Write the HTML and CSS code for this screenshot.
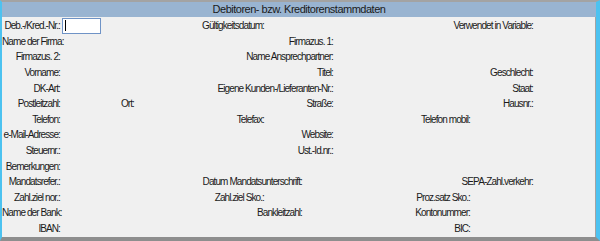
FILE: index.html
```html
<!DOCTYPE html>
<html lang="de">
<head>
    <meta charset="UTF-8">
    <meta name="viewport" content="width=device-width, initial-scale=1.0">
    <title>Debitoren- bzw. Kreditorenstammdaten</title>
    <link rel="stylesheet" href="styles.css">
</head>
<body>
    <div class="window">
        <div class="title-bar">Debitoren- bzw. Kreditorenstammdaten</div>
        <div class="panel">
            <div class="row first">
                <label class="c1">Deb.-/Kred.-Nr.:</label>
                <div class="field c2"><span class="caret"></span></div>
                <label class="c3">Gültigkeitsdatum:</label>
                <label class="c6-7">Verwendet in Variable:</label>
            </div>
            <div class="row">
                <label class="c1">Name der Firma:</label>
                <label class="c4-5">Firmazus. 1:</label>
            </div>
            <div class="row">
                <label class="c1">Firmazus. 2:</label>
                <label class="c3-5">Name Ansprechpartner:</label>
            </div>
            <div class="row">
                <label class="c1">Vorname:</label>
                <label class="c5">Titel:</label>
                <label class="c7">Geschlecht:</label>
            </div>
            <div class="row">
                <label class="c1">DK-Art:</label>
                <label class="c3-5">Eigene Kunden-/Lieferanten-Nr.:</label>
                <label class="c7">Staat:</label>
            </div>
            <div class="row">
                <label class="c1">Postleitzahl:</label>
                <label class="c2">Ort:</label>
                <label class="c5">Straße:</label>
                <label class="c7">Hausnr.:</label>
            </div>
            <div class="row">
                <label class="c1">Telefon:</label>
                <label class="c3">Telefax:</label>
                <label class="c6">Telefon mobil:</label>
            </div>
            <div class="row">
                <label class="c1">e-Mail-Adresse:</label>
                <label class="c4-5">Website:</label>
            </div>
            <div class="row">
                <label class="c1">Steuernr.:</label>
                <label class="c4-5">Ust.-Id.nr.:</label>
            </div>
            <div class="row">
                <label class="c1">Bemerkungen:</label>
            </div>
            <div class="row">
                <label class="c1">Mandatsrefer.:</label>
                <label class="c3-4">Datum Mandatsunterschrift:</label>
                <label class="c6-7">SEPA-Zahl.verkehr:</label>
            </div>
            <div class="row">
                <label class="c1">Zahl.ziel nor.:</label>
                <label class="c3">Zahl.ziel Sko.:</label>
                <label class="c6">Proz.satz Sko.:</label>
            </div>
            <div class="row">
                <label class="c1">Name der Bank:</label>
                <label class="c3-4">Bankleitzahl:</label>
                <label class="c6">Kontonummer:</label>
            </div>
            <div class="row">
                <label class="c1">IBAN:</label>
                <label class="c6">BIC:</label>
            </div>
        </div>
    </div>
</body>
</html>
```

FILE: styles.css
```css
body {
    margin: 0;
    font-family: "Liberation Sans", Arial, sans-serif;
    background-color: #f0f0f0;
}
.window {
    width: 600px;
    height: 241px;
    box-sizing: border-box;
    display: flex;
    flex-direction: column;
    border-left: 2px solid #4cc2f0;
    border-right: 4px solid #4cc2f0; /* selected window edge */
    border-top: 2px solid #a3a3a3;
    border-bottom: 4px solid #8e8e8e;
    overflow: hidden;
}
.title-bar {
    height: 15px;
    line-height: 15px;
    background-color: #99b4d1;
    color: #1a1a1a;
    text-align: center;
    font-size: 11px;
    letter-spacing: -0.5px;
}
.panel {
    flex: 1;
    background-color: #f0f0f0;
    border-right: 1px solid #a3a3a3;
    overflow: hidden;
}
.row {
    display: grid;
    /* column edges at x = 60, 134, 264, 302, 333, 470, 533 */
    grid-template-columns: 58px 74px 130px 38px 31px 137px 63px 1fr;
    height: 15.6px;
    align-items: center;
}
.row.first {
    height: 17px;
}
.row label {
    font-size: 10px;
    letter-spacing: -0.9px;
    line-height: 12px;
    color: #1a1a1a;
    text-align: right;
    white-space: nowrap;
}
.c1 { grid-column: 1; }
.c2 { grid-column: 2; }
.c3 { grid-column: 3; }
.c5 { grid-column: 5; }
.c6 { grid-column: 6; }
.c7 { grid-column: 7; }
.c3-4 { grid-column: 3 / 5; }
.c3-5 { grid-column: 3 / 6; }
.c4-5 { grid-column: 4 / 6; }
.c6-7 { grid-column: 6 / 8; }
.field {
    justify-self: start;
    margin-left: 2px;
    width: 39px;
    height: 16px;
    box-sizing: border-box;
    background-color: #fff;
    border: 1px solid #6f93c6;
    display: flex;
    align-items: center;
    padding-left: 2px;
}
.caret {
    width: 1px;
    height: 11px;
    background-color: #000;
}
```
